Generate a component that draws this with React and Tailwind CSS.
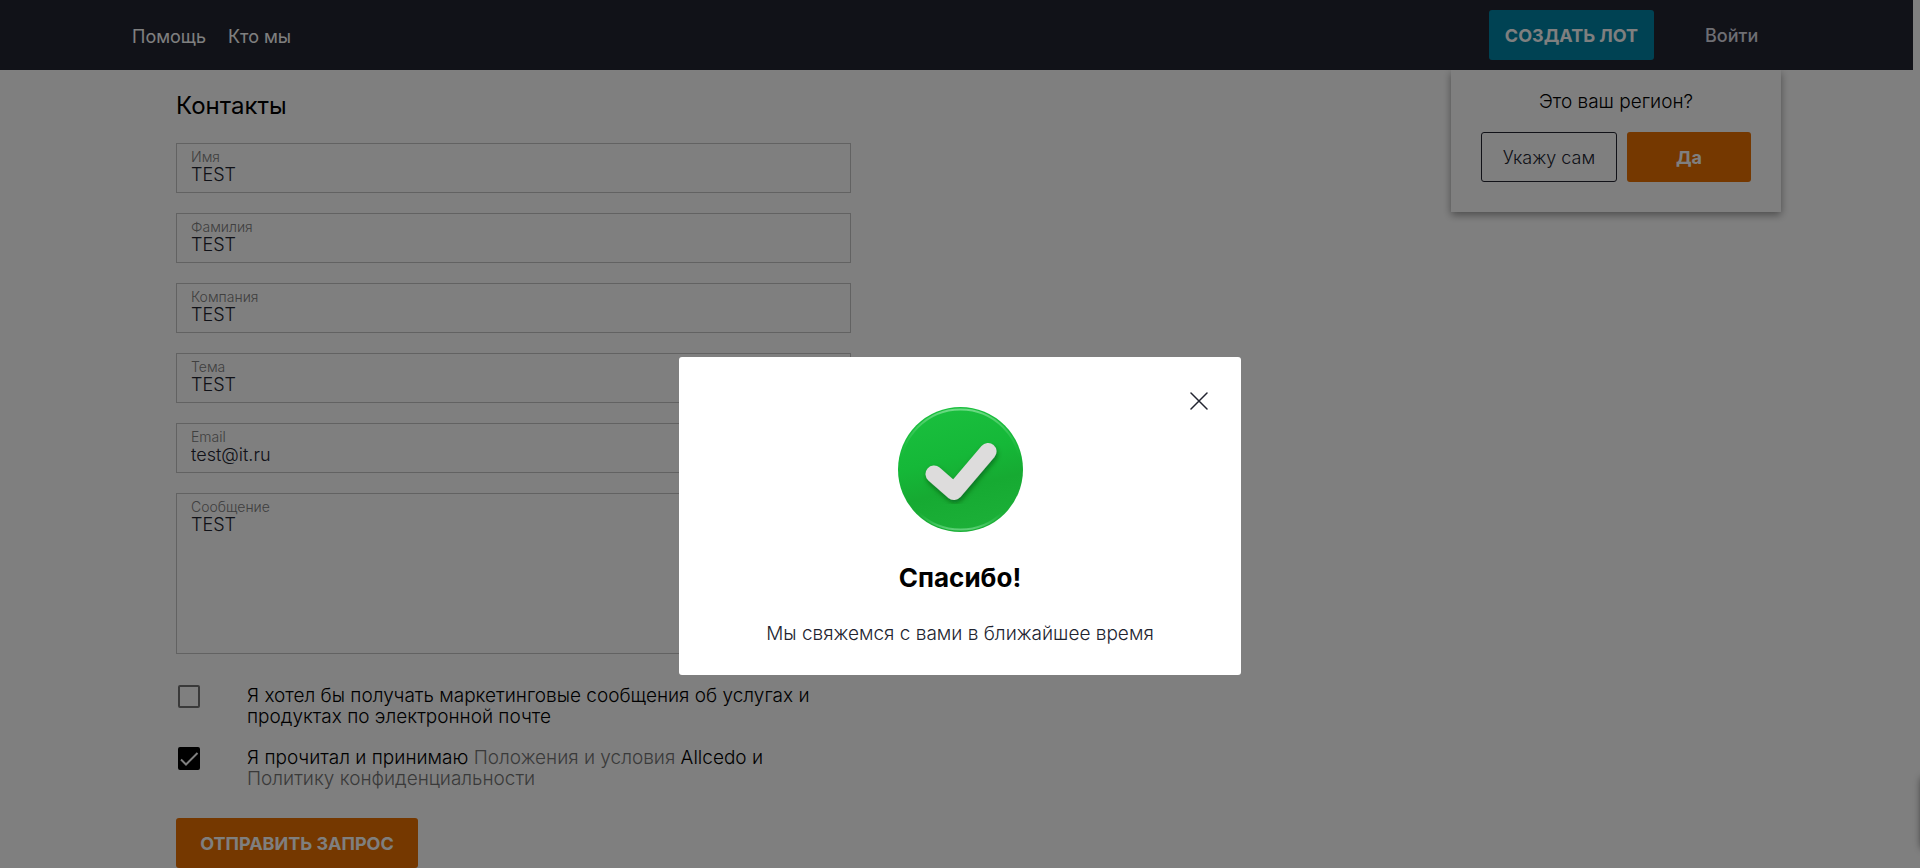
import { useState } from "react";

const fields = [
  { id: "first-name", label: "Имя", value: "TEST", type: "text" },
  { id: "last-name", label: "Фамилия", value: "TEST", type: "text" },
  { id: "company", label: "Компания", value: "TEST", type: "text" },
  { id: "subject", label: "Тема", value: "TEST", type: "text" },
  { id: "email", label: "Email", value: "test@it.ru", type: "email" },
];

function Header() {
  return (
    <header className="relative z-10 mr-[7px] flex h-[70px] items-center justify-between bg-[#222430] pr-[152px] pl-[132px]">
      <nav className="flex gap-[22px] pt-[3px] text-[18px] font-normal text-white">
        <a href="#help">Помощь</a>
        <a href="#about">Кто мы</a>
      </nav>
      <div className="flex items-center gap-[51px]">
        <button className="h-[50px] w-[165px] rounded-[3px] bg-[#0084a6] text-[18px] font-bold text-white">
          СОЗДАТЬ ЛОТ
        </button>
        <a href="#login" className="w-14 text-[18px] font-medium text-[#dcdce6]">
          Войти
        </a>
      </div>
    </header>
  );
}

function RegionPopup() {
  return (
    <aside className="absolute top-[70px] right-[139px] w-[330px] bg-white px-[30px] pt-5 pb-[30px] shadow-[0_3px_8px_rgba(0,0,0,0.4)]">
      <p className="text-center text-[19px] leading-6 font-light">Это ваш регион?</p>
      <div className="mt-[18px] flex gap-[10px]">
        <button className="h-[50px] w-[136px] rounded-[3px] border border-[#222430] text-[18px] font-light text-[#222430]">
          Укажу сам
        </button>
        <button className="h-[50px] flex-1 rounded-[3px] bg-[#ea7000] text-[18px] font-bold text-white">
          Да
        </button>
      </div>
    </aside>
  );
}

function Field({ id, label, value, type }) {
  return (
    <div className="flex h-[50px] flex-col border border-[#c4c4c4] px-[14px] pt-[5px]">
      <label htmlFor={id} className="text-[14px] leading-4 font-light text-[#808080]">
        {label}
      </label>
      <input
        id={id}
        type={type}
        defaultValue={value}
        className="w-full bg-transparent text-[18px] leading-5 font-light text-[#222430] outline-none"
      />
    </div>
  );
}

function Consent({ id, checked, children }) {
  return (
    <div className="flex gap-[47px] pl-[2px]">
      <span className="grid h-[23px] w-[22px] shrink-0">
        <input
          id={id}
          type="checkbox"
          defaultChecked={checked}
          className="peer col-start-1 row-start-1 h-[23px] w-[22px] appearance-none rounded-[2px] border-2 border-[#757575] checked:border-black checked:bg-black"
        />
        <svg
          viewBox="0 0 22 23"
          fill="none"
          stroke="white"
          strokeWidth="2"
          className="pointer-events-none invisible col-start-1 row-start-1 peer-checked:visible"
        >
          <path d="M3 12.5 8 17.5 19.5 6" />
        </svg>
      </span>
      <label htmlFor={id} className="text-[19px] leading-[21px] font-light">
        {children}
      </label>
    </div>
  );
}

function ContactForm() {
  return (
    <form className="w-[675px]">
      <h1 className="text-[24px] leading-7">Контакты</h1>
      <div className="mt-[23px] flex flex-col gap-5">
        {fields.map((field) => (
          <Field key={field.id} {...field} />
        ))}
        <div className="flex h-[161px] flex-col border border-[#c4c4c4] px-[14px] pt-[5px]">
          <label htmlFor="message" className="text-[14px] leading-4 font-light text-[#808080]">
            Сообщение
          </label>
          <textarea
            id="message"
            defaultValue="TEST"
            className="w-full flex-1 resize-none bg-transparent text-[18px] leading-5 font-light text-[#222430] outline-none"
          />
        </div>
      </div>
      <div className="mt-[31px] flex flex-col gap-5">
        <Consent id="marketing">
          Я хотел бы получать маркетинговые сообщения об услугах и<br />
          продуктах по электронной почте
        </Consent>
        <Consent id="terms" checked>
          Я прочитал и принимаю{" "}
          <a href="#terms" className="text-[#757575]">Положения и условия</a> Allcedo и<br />
          <a href="#privacy" className="text-[#757575]">Политику конфиденциальности</a>
        </Consent>
      </div>
      <button
        type="button"
        className="mt-[29px] h-[50px] w-[242px] rounded-[3px] bg-[#ea7000] text-[18px] font-bold text-white"
      >
        ОТПРАВИТЬ ЗАПРОС
      </button>
    </form>
  );
}

function SuccessIcon() {
  return (
    <svg viewBox="0 0 125 125" className="h-[125px] w-[125px]" aria-hidden="true">
      <defs>
        <linearGradient id="disc" x1="0.35" y1="0" x2="0.6" y2="1">
          <stop offset="0" stopColor="#1abf3e" />
          <stop offset="0.4" stopColor="#15b838" />
          <stop offset="0.65" stopColor="#16aa32" />
          <stop offset="1" stopColor="#1cb038" />
        </linearGradient>
        <linearGradient id="rim" x1="0" y1="0" x2="0" y2="1">
          <stop offset="0" stopColor="#6fdb86" />
          <stop offset="0.4" stopColor="#2cc04c" stopOpacity="0" />
          <stop offset="0.85" stopColor="#2cc04c" stopOpacity="0" />
          <stop offset="1" stopColor="#5fd078" />
        </linearGradient>
        <filter id="drop" x="-20%" y="-20%" width="150%" height="150%">
          <feDropShadow dx="1" dy="3" stdDeviation="2.5" floodColor="#064d14" floodOpacity="0.6" />
        </filter>
      </defs>
      <circle cx="62.5" cy="62.5" r="62.5" fill="url(#disc)" />
      <circle cx="62.5" cy="62.5" r="60" fill="none" stroke="url(#rim)" strokeWidth="2" />
      <path
        d="M36 67 56 84.500 90 44.500"
        fill="none"
        stroke="#dddcdc"
        strokeWidth="17"
        strokeLinejoin="round"
        strokeLinecap="round"
        filter="url(#drop)"
      />
    </svg>
  );
}

function SuccessDialog({ onClose }) {
  return (
    <div className="fixed inset-0 z-20 flex items-start justify-center bg-black/50 pt-[357px]">
      <div
        role="dialog"
        aria-modal="true"
        aria-labelledby="dialog-title"
        className="relative flex w-[562px] flex-col items-center rounded-[3px] bg-white pt-[50px] pb-[29px]"
      >
        <button aria-label="Закрыть" onClick={onClose} className="absolute top-[35px] right-[33px]">
          <svg viewBox="0 0 18 18" className="h-[18px] w-[18px]" fill="none" stroke="#222430" strokeWidth="1.500" strokeLinecap="round">
            <path d="M1 1 17 17M17 1 1 17" />
          </svg>
        </button>
        <SuccessIcon />
        <h2 id="dialog-title" className="mt-[30px] text-[26px] leading-8 font-bold">
          Спасибо!
        </h2>
        <p className="mt-7 text-[19px] leading-6 font-light text-[#222430]">
          Мы свяжемся с вами в ближайшее время
        </p>
      </div>
    </div>
  );
}

export default function App() {
  const [open, setOpen] = useState(true);
  return (
    <div className="relative overflow-hidden bg-white font-[Inter,sans-serif] text-black">
      <Header />
      <RegionPopup />
      <main className="pt-[22px] pl-[176px]">
        <ContactForm />
      </main>
      <div className="fixed top-[778px] -right-[72px] h-[70px] w-[70px] shadow-[0_0_8px_rgba(0,0,0,0.7)]" />
      {open && <SuccessDialog onClose={() => setOpen(false)} />}
    </div>
  );
}
